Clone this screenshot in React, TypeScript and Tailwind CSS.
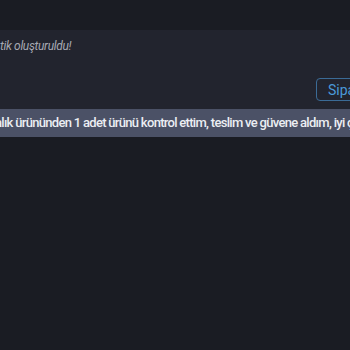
export default function App() {
  return (
    <div className="h-[350px] w-[350px] overflow-hidden bg-[#1a1c23] flex flex-col font-['Roboto',sans-serif]">
      <div className="h-[30px] shrink-0" />
      <div className="h-[79px] shrink-0 bg-[#22242e] flex flex-col overflow-hidden">
        <div className="pt-[7px] h-[30px] whitespace-nowrap text-[12px] italic tracking-[-0.35px] text-[#a6a9b3]">
          tik oluşturuldu!
        </div>
        <div className="flex-1 flex items-start pt-[18px] pl-[316px]">
          <button className="shrink-0 h-[23px] rounded-[4px] border border-[#3b6b96] pl-[11px] pr-3 text-[14px] text-[#4b9ad9] leading-none whitespace-nowrap">
            Siparişi Gör
          </button>
        </div>
      </div>
      <div className="h-[28px] shrink-0 bg-[#4b5166] flex items-center overflow-hidden">
        <span className="whitespace-nowrap text-[13px] font-medium tracking-[-0.7px] text-[#eceef3] -ml-[5px]">
          alık ürününden 1 adet ürünü kontrol ettim, teslim ve güvene aldım, iyi çalışmalar.
        </span>
      </div>
    </div>
  );
}
